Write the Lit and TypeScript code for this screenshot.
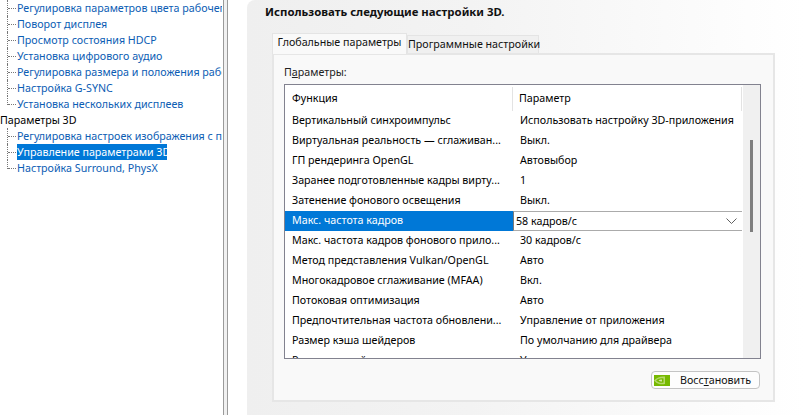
import { LitElement, html, css, svg } from "lit";
import { customElement } from "lit/decorators.js";

const tree1 = [
  "Регулировка параметров цвета рабочего стола",
  "Поворот дисплея",
  "Просмотр состояния HDCP",
  "Установка цифрового аудио",
  "Регулировка размера и положения рабочего стола",
  "Настройка G-SYNC",
  "Установка нескольких дисплеев",
];
const tree2 = [
  "Регулировка настроек изображения с просмотром",
  "Управление параметрами 3D",
  "Настройка Surround, PhysX",
];
const rows: [string, string][] = [
  ["Вертикальный синхроимпульс", "Использовать настройку 3D-приложения"],
  ["Виртуальная реальность — сглаживан...", "Выкл."],
  ["ГП рендеринга OpenGL", "Автовыбор"],
  ["Заранее подготовленные кадры вирту...", "1"],
  ["Затенение фонового освещения", "Выкл."],
  ["Макс. частота кадров", "58 кадров/с"],
  ["Макс. частота кадров фонового прило...", "30 кадров/с"],
  ["Метод представления Vulkan/OpenGL", "Авто"],
  ["Многокадровое сглаживание (MFAA)", "Вкл."],
  ["Потоковая оптимизация", "Авто"],
  ["Предпочтительная частота обновлени...", "Управление от приложения"],
  ["Размер кэша шейдеров", "По умолчанию для драйвера"],
  ["Режим низкой задержки", "Умолч."],
];
const ACTIVE = 5;

const chevron = svg`<svg class="chev" width="11" height="6" viewBox="0 0 11 6"><path d="M.5.5 5.5 5.5 10.5.5" fill="none" stroke="#606060" stroke-width="1"/></svg>`;
const logo = svg`<svg class="logo" width="16" height="11" viewBox="0 0 16 11">
  <rect width="16" height="11" fill="#76b900"/>
  <path d="M0 5.5C3 2 7 1 11 1.5V9C7 10 3 9 0 5.5Z" fill="#b5d96b"/>
  <path d="M2 5.5C4 3.5 7 3 9.5 3.5V7.6C7 8.2 4 7.5 2 5.5Z" fill="#76b900"/>
  <path d="M4.5 5.5C5.6 4.6 7 4.4 8 4.7V6.5C7 6.7 5.6 6.4 4.5 5.5Z" fill="#d5e8a8"/>
</svg>`;

@customElement("app-root")
export class AppRoot extends LitElement {
  static styles = css`
    :host { display: block; width: 804px; height: 415px; overflow: hidden; background: #fff;
      font-family: "Noto Sans", "Liberation Sans", sans-serif; font-size: 10.7px; color: #000; }
    .page { display: flex; height: 415px; }
    .left { width: 222px; flex: none; background: #fff; overflow: hidden; margin-right: 1px; }
    .split { width: 3px; flex: none; background: #f0f0f0; border-left: 1px solid #9a9a9a; border-right: 1px solid #9a9a9a; }
    .gap { width: 19px; flex: none; background: #fff; }
    .right { flex: 1; min-width: 0; border-top-left-radius: 8px; padding-left: 18px;
      background: linear-gradient(90deg, #efefef, #f3f3f3 40%, #fbfbfb 80%, #fff); }

    .tn { height: 16px; width: 400px; padding-left: 7px; display: flex; align-items: flex-start; white-space: nowrap; color: #0c5db4; }
    .stem { width: 0; height: 16px; flex: none; border-left: 1px dotted #777; }
    .tn.last .stem { height: 9px; }
    .dots { width: 8px; flex: none; margin: 8px 1px 0 0; border-top: 1px dotted #777; }
    .tn span { line-height: 16px; height: 16px; display: block; }
    .top { height: 16px; line-height: 16px; color: #000; }
    .tn.sel span { background: #0078d7; color: #fff; width: 150px; }

    .title { font-weight: 700; font-size: 11.4px; height: 33px; line-height: 24px; color: #111; white-space: nowrap; }
    .tabs { display: flex; align-items: flex-end; margin-left: 7px; height: 20px; position: relative; z-index: 1; white-space: nowrap; }
    .tab { height: 18px; line-height: 17px; box-sizing: border-box; width: 132px; text-align: center;
      background: #f0f0f0; border: 1px solid #e4e4e4; border-bottom: 0; color: #111; }
    .tab.on { height: 21px; line-height: 17px; width: 135px; background: #f9f9f9; margin-bottom: -1px; }
    .panel { margin-left: 7px; width: 503px; height: 349px; box-sizing: border-box; border: 2px solid #e6e6e6;
      background: #f9f9f9; padding: 10px 12px 0 10px; display: flex; flex-direction: column; }
    .lbl { height: 19px; line-height: 15px; color: #222; }
    .list { height: 275px; flex: none; box-sizing: border-box; border: 1px solid #82828f; background: #fff; display: flex; overflow: hidden; }
    .table { flex: 1; min-width: 0; overflow: hidden; }
    .r { display: flex; height: 20px; line-height: 19px; white-space: nowrap; }
    .hd { height: 26px; line-height: 26px; }
    .c1 { width: 228px; flex: none; padding-left: 7px; box-sizing: border-box; overflow: hidden; }
    .c2 { flex: 1; min-width: 0; padding-left: 7px; box-sizing: border-box; overflow: hidden; }
    .hd .c1 { border-right: 1px solid #e3e3e3; margin-top: 2px; height: 24px; line-height: 22px; }
    .hd .c2 { padding-left: 6px; border-right: 1px solid #e3e3e3; margin-top: 2px; height: 24px; line-height: 22px; }
    .active .c1 { background: #0078d7; color: #fff; }
    .active .c2 { display: flex; align-items: center; justify-content: space-between; padding: 0 5px 0 2px;
      border: 1px solid #ababab; border-left-color: #7a7a7a; border-right: 0; line-height: 18px; }
    .chev { flex: none; display: block; }
    .scroll { width: 17px; flex: none; background: #f0f0f0; margin-left: 1px; padding: 55px 0 0 7px; box-sizing: border-box; }
    .thumb { width: 3px; height: 92px; background: #7e7e7e; }
    .foot { display: flex; justify-content: flex-end; padding: 12px 1px 0 0; }
    .btn { width: 109px; height: 18px; box-sizing: border-box; border: 1px solid #c4c4c4; border-radius: 4px; background: #fdfdfd;
      display: flex; align-items: center; padding-left: 2px; line-height: 16px; color: #111; }
    .logo { flex: none; display: block; margin-right: 10px; }
    u { text-decoration: underline; }
  `;

  private node(t: string, last: boolean, sel = false) {
    return html`<div class="tn ${sel ? "sel" : ""} ${last ? "last" : ""}"><div class="stem"></div><div class="dots"></div><span>${t}</span></div>`;
  }

  render() {
    return html`<div class="page">
      <div class="left">
        ${tree1.map((t, i) => this.node(t, i === tree1.length - 1))}
        <div class="top">Параметры 3D</div>
        ${tree2.map((t, i) => this.node(t, i === tree2.length - 1, i === 1))}
      </div>
      <div class="split"></div>
      <div class="gap"></div>
      <div class="right">
        <div class="title">Использовать следующие настройки 3D.</div>
        <div class="tabs">
          <div class="tab on">Глобальные параметры</div>
          <div class="tab">Программные настройки</div>
        </div>
        <div class="panel">
          <div class="lbl">П<u>а</u>раметры:</div>
          <div class="list">
            <div class="table">
              <div class="r hd"><div class="c1">Функция</div><div class="c2">Параметр</div></div>
              ${rows.map(([a, b], i) =>
                i === ACTIVE
                  ? html`<div class="r active"><div class="c1">${a}</div><div class="c2"><span>${b}</span>${chevron}</div></div>`
                  : html`<div class="r"><div class="c1">${a}</div><div class="c2">${b}</div></div>`
              )}
            </div>
            <div class="scroll"><div class="thumb"></div></div>
          </div>
          <div class="foot">
            <div class="btn">${logo}<span>Восс<u>т</u>ановить</span></div>
          </div>
        </div>
      </div>
    </div>`;
  }
}
